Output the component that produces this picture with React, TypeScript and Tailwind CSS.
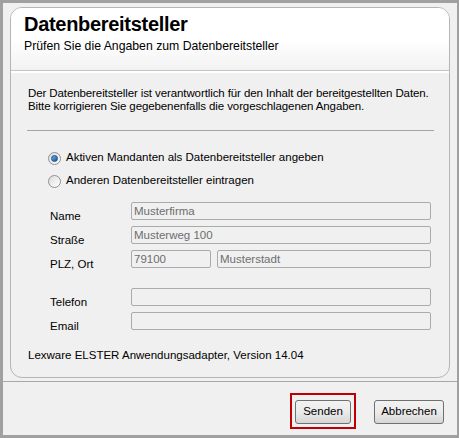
import React from "react";

const FONT = { fontFamily: '"Liberation Sans", Arial, sans-serif' };

function Radio({ checked, label }: { checked?: boolean; label: string }) {
  return (
    <div className="flex items-center gap-[5px] h-[16px]">
      <span className="w-[13px] h-[13px] rounded-full border border-[#8f8f8f] bg-gradient-to-br from-[#dcdcdc] to-[#ffffff] flex items-center justify-center">
        {checked && (
          <span className="w-[7px] h-[7px] rounded-full bg-gradient-to-br from-[#6ab2ee] to-[#15539e] border border-[#1b4f8a]" />
        )}
      </span>
      <span className="text-[11.5px] text-[#000]">{label}</span>
    </div>
  );
}

function Field({ value, className }: { value?: string; className?: string }) {
  return (
    <div
      className={
        "h-[18px] border border-[#ababab] rounded-[2px] bg-[#f0f0f0] px-[2px] text-[11.5px] leading-[16px] text-[#6d6d6d] " +
        (className ?? "")
      }
    >
      {value}
    </div>
  );
}

function Row({ label, children }: { label: string; children: React.ReactNode }) {
  return (
    <div className="flex items-end h-[24px]">
      <div className="w-[81px] text-[11.5px] leading-[14px] pb-[3px]">{label}</div>
      <div className="flex-1 flex gap-[6px] items-start self-start">{children}</div>
    </div>
  );
}

export default function App() {
  return (
    <div
      style={FONT}
      className="w-[459px] h-[438px] bg-[#f0f0f0] border-[3px] border-[#a0a0a0] border-r-[2px] flex flex-col text-[#000]"
    >
      <div className="mx-[7px] mt-[4px] h-[371px] rounded-[12px] border border-[#b5b5b5] bg-[#f0f0f0] flex flex-col overflow-hidden">
        {/* Header */}
        <div className="h-[63px] bg-gradient-to-b from-[#ffffff] via-[#ffffff] to-[#f2f2f2] px-[13px] pt-[4px] border-b border-[#c4c4c4]">
          <div className="text-[20px] font-bold leading-[24px] tracking-[-0.3px]">Datenbereitsteller</div>
          <div className="text-[12.25px] leading-[16px] mt-[2px]">Prüfen Sie die Angaben zum Datenbereitsteller</div>
        </div>
        <div className="h-[2px] bg-[#ffffff]" />

        {/* Body */}
        <div className="px-[16px] pt-[14px] flex flex-col">
          <div className="text-[11.5px] leading-[13px] text-[#000] pl-[1px] tracking-[-0.1px]">
            Der Datenbereitsteller ist verantwortlich für den Inhalt der bereitgestellten Daten.
            <br />
            Bitte korrigieren Sie gegebenenfalls die vorgeschlagenen Angaben.
          </div>
          <div className="h-px bg-[#a5a5a5] mt-[17px] mr-[-1px]" />

          <div className="pl-[21px] mt-[19px] flex flex-col gap-[7px]">
            <Radio checked label="Aktiven Mandanten als Datenbereitsteller angeben" />
            <Radio label="Anderen Datenbereitsteller eintragen" />
          </div>

          <div className="pl-[23px] pr-[2px] mt-[13px] flex flex-col">
            <Row label="Name">
              <Field value="Musterfirma" className="flex-1" />
            </Row>
            <Row label="Straße">
              <Field value="Musterweg 100" className="flex-1" />
            </Row>
            <Row label="PLZ, Ort">
              <Field value="79100" className="w-[80px]" />
              <Field value="Musterstadt" className="flex-1" />
            </Row>
            <div className="h-[14px]" />
            <Row label="Telefon">
              <Field className="flex-1" />
            </Row>
            <Row label="Email">
              <Field className="flex-1" />
            </Row>
          </div>

          <div className="text-[11.5px] leading-[14px] mt-[12px] pl-[1px]">
            Lexware ELSTER Anwendungsadapter, Version 14.04
          </div>
        </div>
      </div>

      {/* Footer */}
      <div className="mt-[3px] border-t border-[#a8a8a8] flex-1 flex items-start justify-end pr-[13px] pt-[11px] gap-[18px]">
        <div className="border-[2px] border-[#c00000] p-[3px]">
          <button className="w-[56px] h-[24px] rounded-[3px] border border-[#707070] bg-gradient-to-b from-[#f2f2f2] via-[#ebebeb] to-[#d6d6d6] text-[11.5px]">
            Senden
          </button>
        </div>
        <div className="pt-[5px]">
          <button className="w-[70px] h-[24px] rounded-[3px] border border-[#707070] bg-gradient-to-b from-[#f2f2f2] via-[#ebebeb] to-[#d6d6d6] text-[11.5px]">
            Abbrechen
          </button>
        </div>
      </div>
    </div>
  );
}
